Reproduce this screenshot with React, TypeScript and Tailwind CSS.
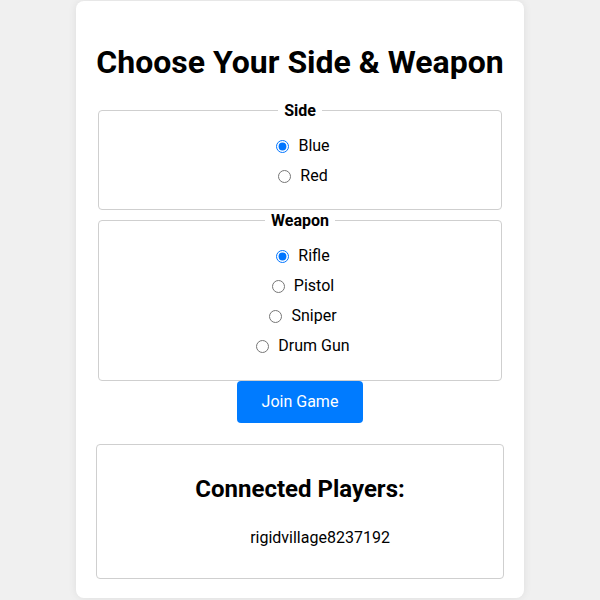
import React from "react";

function Radio({ name, label, checked }: { name: string; label: string; checked?: boolean }) {
  return (
    <label className="flex h-[30px] items-center justify-center gap-[9px] pl-[6px] text-[16px] text-black">
      <input type="radio" name={name} defaultChecked={checked} className="m-0 h-[13px] w-[13px]" />
      <span>{label}</span>
    </label>
  );
}

export default function App() {
  return (
    <div className="flex h-[600px] w-[600px] justify-center overflow-hidden bg-[#f0f0f0] font-['Roboto',sans-serif] text-black">
      <div className="mt-[1px] flex h-[597px] w-[448px] flex-col rounded-[8px] bg-white px-[20px] pt-[20px] shadow-[0_0_8px_rgba(0,0,0,0.08)]">
        <h1 className="mt-[23px] mb-[20px] text-center text-[32px] font-bold leading-[37px]">Choose Your Side &amp; Weapon</h1>

        <fieldset className="mx-[2px] rounded-[4px] border border-[#cfcfcf] px-3 pb-[18px]">
          <legend className="mx-auto px-[6px] text-[16px] font-bold leading-[19px]">Side</legend>
          <div className="pt-[11px]">
            <Radio name="side" label="Blue" checked />
            <Radio name="side" label="Red" />
          </div>
        </fieldset>

        <fieldset className="mx-[2px] mt-[1px] rounded-[4px] border border-[#cfcfcf] px-3 pb-[19px]">
          <legend className="mx-auto px-[6px] text-[16px] font-bold leading-[19px]">Weapon</legend>
          <div className="pt-[11px]">
            <Radio name="weapon" label="Rifle" checked />
            <Radio name="weapon" label="Pistol" />
            <Radio name="weapon" label="Sniper" />
            <Radio name="weapon" label="Drum Gun" />
          </div>
        </fieldset>

        <div className="flex justify-center">
          <button className="h-[42px] w-[126px] rounded-[4px] bg-[#007bff] text-[16px] text-white">Join Game</button>
        </div>

        <div className="mt-[21px] rounded-[4px] border border-[#cfcfcf] px-[10px] pt-[10px] pb-[12px]">
          <h2 className="mt-[20px] text-center text-[24px] font-bold leading-[28px]">Connected Players:</h2>
          <ul className="mt-[23px] list-none pl-[40px] text-center">
            <li className="text-[16px] leading-[24px]">rigidvillage8237192</li>
          </ul>
          <div className="h-[16px]" />
        </div>
      </div>
    </div>
  );
}
